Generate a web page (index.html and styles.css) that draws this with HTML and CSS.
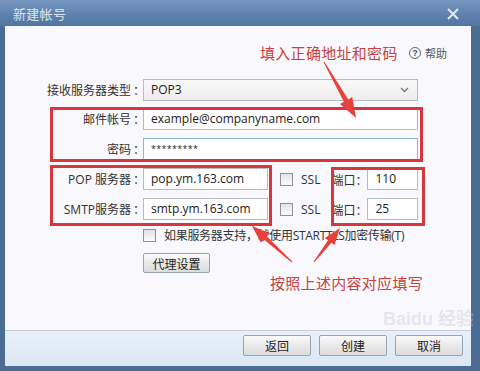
FILE: index.html
```html
<!DOCTYPE html>
<html lang="zh-CN">
<head>
  <meta charset="UTF-8">
  <meta name="viewport" content="width=device-width, initial-scale=1.0">
  <title>新建帐号</title>
  <link rel="stylesheet" href="styles.css">
</head>
<body>
  <!-- Dialog window -->
  <div class="window">
    <div class="titlebar">
      <span class="title">新建帐号</span>
      <svg class="close" width="12" height="12" viewBox="0 0 12 12">
        <path d="M1 1 L11 11 M11 1 L1 11" stroke="#e3e9f1" stroke-width="2" fill="none"/>
      </svg>
    </div>

    <div class="client">
      <div class="content">
        <!-- Help link -->
        <div class="helpbar">
          <span class="help-icon">?</span>
          <span class="help-text">帮助</span>
        </div>

        <!-- Account form -->
        <div class="form">
          <div class="row first">
            <label class="label">接收服务器类型<span class="colon">：</span></label>
            <div class="select">
              <span>POP3</span>
              <svg width="9" height="6" viewBox="0 0 9 6"><path d="M1 1 L4.5 4.5 L8 1" stroke="#777" stroke-width="1.3" fill="none"/></svg>
            </div>
          </div>
          <div class="row">
            <label class="label">邮件帐号<span class="colon">：</span></label>
            <div class="input wide">example@companyname.com</div>
          </div>
          <div class="row">
            <label class="label">密码<span class="colon">：</span></label>
            <div class="input wide focus">*********</div>
          </div>
          <div class="row">
            <label class="label">POP 服务器<span class="colon">：</span></label>
            <div class="input server">pop.ym.163.com</div>
            <span class="checkbox"></span>
            <span class="ssl">SSL</span>
            <span class="port-label">端口<span class="colon">：</span></span>
            <div class="input port">110</div>
          </div>
          <div class="row">
            <label class="label">SMTP服务器<span class="colon">：</span></label>
            <div class="input server">smtp.ym.163.com</div>
            <span class="checkbox"></span>
            <span class="ssl">SSL</span>
            <span class="port-label">端口<span class="colon">：</span></span>
            <div class="input port">25</div>
          </div>
          <div class="row check-row">
            <span class="label"></span>
            <span class="checkbox"></span>
            <span class="check-text">如果服务器支持，就使用STARTTLS加密传输(T)</span>
          </div>
          <div class="row button-row">
            <span class="label"></span>
            <button class="btn proxy">代理设置</button>
          </div>
        </div>

        <!-- Annotations drawn over the screenshot -->
        <div class="note note-top">填入正确地址和密码</div>
        <div class="note note-bottom">按照上述内容对应填写</div>
        <div class="mark mark-account"></div>
        <div class="mark mark-server"></div>
        <div class="mark mark-port"></div>
        <div class="watermark">Baidu 经验</div>
      </div>

      <!-- Footer buttons -->
      <div class="footer">
        <button class="btn">返回</button>
        <button class="btn">创建</button>
        <button class="btn">取消</button>
      </div>
    </div>

    <svg class="arrows" width="480" height="371" viewBox="0 0 480 371">
      <polygon points="323.6,62.2 343.9,101.8 340,104.1 356,118 352.2,97.1 348.3,99.4 324.4,61.8" fill="#e8403b"/>
      <polygon points="292.3,261.6 266.9,236.4 269.8,233.2 252,226 261,242.8 263.9,239.6 291.7,262.4" fill="#e8403b"/>
      <polygon points="314.4,262.3 331.4,242.8 334.5,245.1 340,228 324.9,237.9 328,240.2 313.6,261.7" fill="#e8403b"/>
    </svg>
  </div>
</body>
</html>
```

FILE: styles.css
```css
body {
  margin: 0;
  padding: 0;
  font-family: "Open Sans", "Noto Sans CJK SC", sans-serif;
  font-size: 12px;
  color: #222;
}

/* Window frame */
.window {
  position: relative;
  width: 480px;
  height: 371px;
  background: #4b6d94;
  display: flex;
  flex-direction: column;
  overflow: hidden;
}

.titlebar {
  height: 26px;
  flex: none;
  display: flex;
  align-items: center;
  justify-content: space-between;
  padding: 0 21px 0 13px;
  background: linear-gradient(#7897c0, #5c80ad 60%, #52769f);
}

.title {
  font-family: "Noto Sans CJK SC", sans-serif;
  font-size: 13px;
  color: #dfe6ef;
  letter-spacing: 0.3px;
}

.close {
  margin-top: 2px;
}

.client {
  flex: 1;
  margin: 0 9px 5px 5px;
  display: flex;
  flex-direction: column;
}

.content {
  position: relative;
  flex: 1;
  background: #f8f8fd;
  padding-top: 20px;
}

/* Help */
.helpbar {
  height: 14px;
  display: flex;
  align-items: center;
  justify-content: flex-end;
  padding-right: 24px;
  gap: 4px;
}

.help-icon {
  width: 10px;
  height: 10px;
  border: 1px solid #666;
  border-radius: 50%;
  font-size: 9px;
  line-height: 10px;
  text-align: center;
  color: #555;
  font-family: "Liberation Sans", sans-serif;
  font-weight: bold;
}

.help-text {
  font-family: "Noto Sans CJK SC", sans-serif;
  font-size: 11px;
  color: #555;
}

/* Form */
.form {
  margin-top: 19px;
}

.row {
  display: flex;
  align-items: center;
  height: 22px;
  margin-bottom: 8px;
}

.row.first {
  margin-bottom: 7px;
}

.label {
  width: 138px;
  flex: none;
  text-align: right;
  font-family: "Open Sans", "Noto Sans CJK SC", sans-serif;
  font-size: 12px;
  color: #333;
  white-space: nowrap;
}

.colon {
  font-family: "Noto Sans CJK JP", sans-serif;
  margin-left: 2px;
  margin-right: -2px;
}

.select,
.input {
  box-sizing: border-box;
  height: 22px;
  border: 1px solid #b6bbc3;
  background: #fff;
  padding: 0 7px;
  font-size: 12px;
  line-height: 20px;
  color: #222;
  white-space: nowrap;
}

.select {
  width: 275px;
  display: flex;
  align-items: center;
  justify-content: space-between;
  background: linear-gradient(#f8f8f8, #eeeeee);
  padding-right: 8px;
}

.input.wide {
  width: 275px;
}

.input.focus {
  border-color: #89b4df;
  font-size: 9px;
  letter-spacing: 0.3px;
}

.input.server {
  width: 125px;
  flex: none;
}

.input.port {
  width: 51px;
  flex: none;
  margin-left: 2px;
}

.checkbox {
  box-sizing: border-box;
  width: 13px;
  height: 13px;
  flex: none;
  border: 1px solid #8c9199;
  background: linear-gradient(#e3e3e3, #fbfbfb);
}

.row .checkbox {
  margin-left: 12px;
}

.check-row .checkbox {
  margin-left: 0;
}

.ssl {
  margin-left: 8px;
  font-size: 12px;
  color: #333;
  flex: none;
}

.port-label {
  margin-left: 11px;
  flex: none;
  font-family: "Noto Sans CJK SC", sans-serif;
  font-size: 12px;
  color: #333;
  white-space: nowrap;
}

.port-label .colon {
  margin-left: 0;
}

.check-row {
  height: 14px;
  margin-bottom: 11px;
}

.check-text {
  margin-left: 8px;
  font-size: 12px;
  letter-spacing: -0.3px;
  color: #333;
  white-space: nowrap;
}

.button-row {
  height: 20px;
}

/* Buttons */
.btn {
  box-sizing: border-box;
  height: 21px;
  width: 68px;
  padding: 0;
  border: 1px solid #9aa3b0;
  border-radius: 2px;
  background: linear-gradient(#fbfbfb, #e9e9e9 50%, #dcdcdc);
  font-family: "Noto Sans CJK SC", sans-serif;
  font-size: 12px;
  color: #222;
}

.btn.proxy {
  height: 20px;
  width: 67px;
}

.footer {
  height: 31px;
  flex: none;
  border-top: 1px solid #c6ccd6;
  background: linear-gradient(#e7f0fa, #dce7f4);
  display: flex;
  justify-content: flex-end;
  align-items: flex-start;
  gap: 8px;
  padding: 4px 8px 0 0;
}

/* Annotations */
.note {
  position: absolute;
  font-family: "Noto Sans CJK SC", sans-serif;
  font-size: 15px;
  line-height: 18px;
  color: #c8413d;
  letter-spacing: 0.3px;
  white-space: nowrap;
}

.note-top {
  left: 255px;
  top: 18px;
}

.note-bottom {
  left: 265px;
  top: 248px;
}

.mark {
  position: absolute;
  box-sizing: border-box;
  border: 3px solid #d9353c;
}

.mark-account {
  left: 45px;
  top: 81px;
  width: 373px;
  height: 55px;
}

.mark-server {
  left: 45px;
  top: 139px;
  width: 222px;
  height: 61px;
}

.mark-port {
  left: 326px;
  top: 141px;
  width: 94px;
  height: 59px;
}

.watermark {
  position: absolute;
  left: 378px;
  top: 282px;
  font-family: "Liberation Sans", "Noto Sans CJK SC", sans-serif;
  font-size: 18px;
  line-height: 22px;
  font-weight: bold;
  color: rgba(190, 195, 210, 0.35);
  white-space: nowrap;
}

.arrows {
  position: absolute;
  left: 0;
  top: 0;
  pointer-events: none;
}
```
